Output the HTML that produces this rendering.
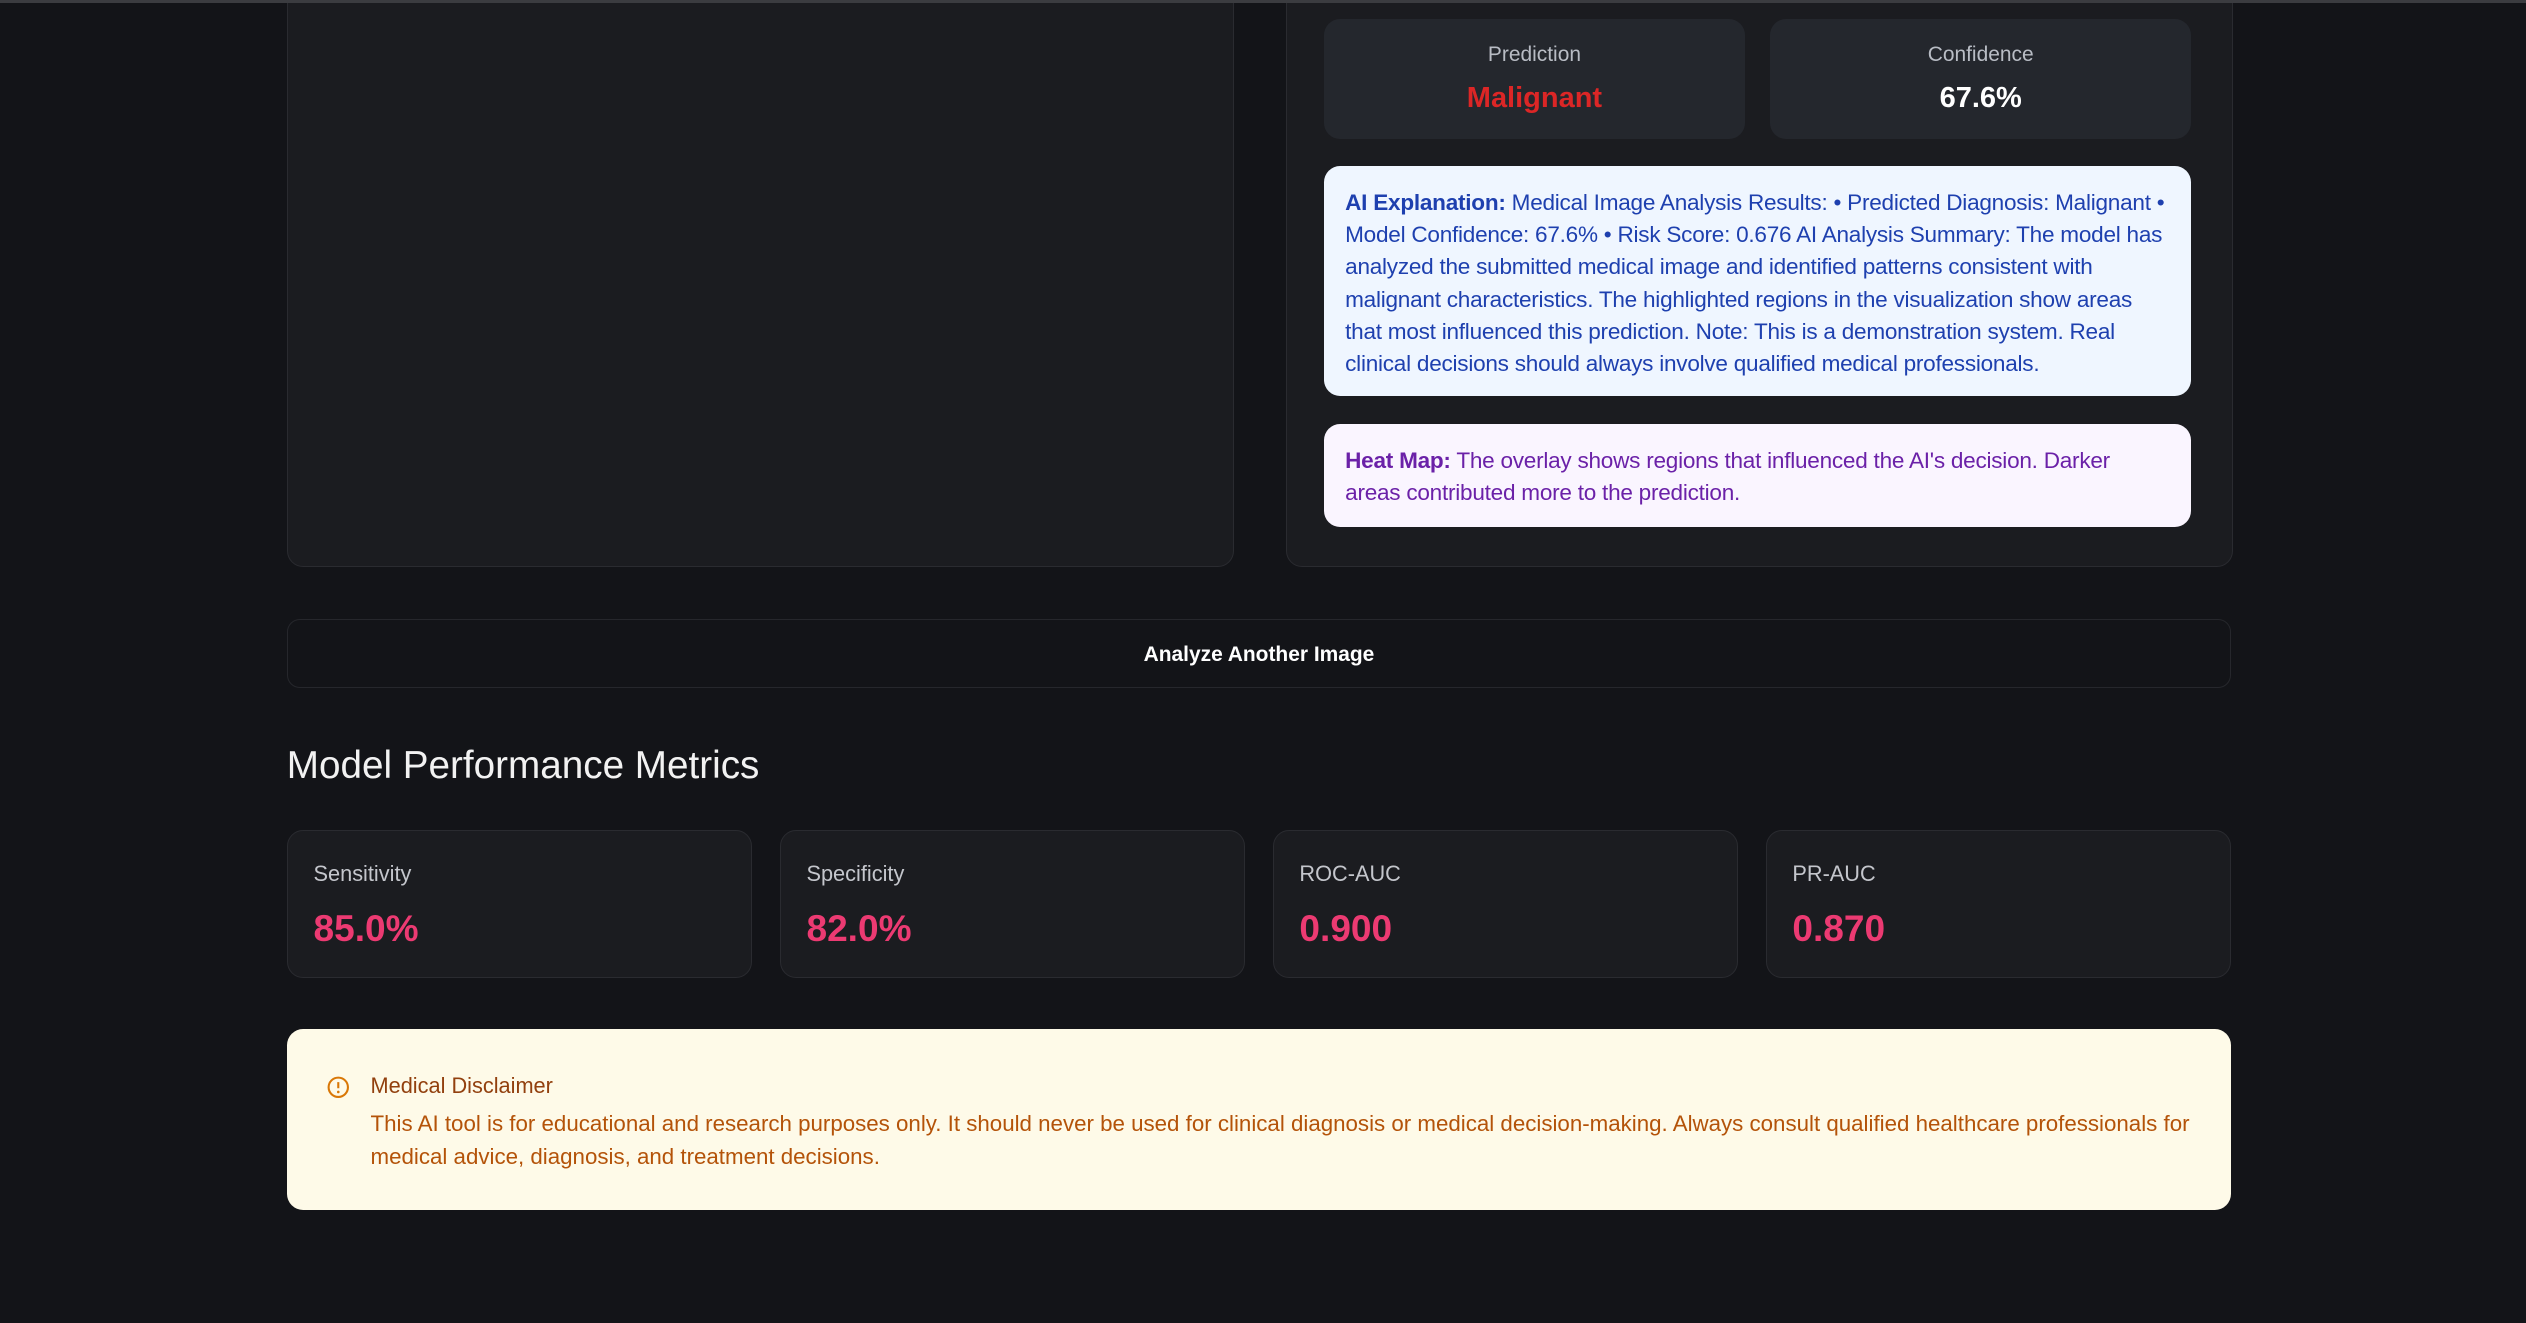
<!DOCTYPE html>
<html><head><meta charset="utf-8"><style>
html,body{margin:0;padding:0;}
body{width:1568px;height:821px;zoom:1.61097;background:#131418;font-family:"Liberation Sans",sans-serif;position:relative;overflow:hidden;}
.abs{position:absolute;box-sizing:border-box;}
.card{background:#1b1c20;border:1px solid #2a2b30;border-radius:10px;}
.stat{background:#24272d;border-radius:10px;text-align:center;}
.stat .l{font-size:13px;color:#b8bcc4;margin-top:15px;}
.stat .v{font-size:18px;font-weight:bold;margin-top:9px;}
.info{border-radius:10px;padding:13px 13px;font-size:14px;line-height:20px;white-space:nowrap;letter-spacing:-0.15px;}
.m{background:#1b1c20;border:1px solid #2a2b30;border-radius:10px;padding:0 16px;}
.m .l{font-size:13.5px;color:#c4c6cc;margin-top:19px;}
.m .v{font-size:23px;font-weight:bold;color:#ec3a72;margin-top:12px;}
</style></head><body>
<div class="abs card" style="left:178px;top:-12px;width:588px;height:364px"></div>
<div class="abs card" style="left:798px;top:-12px;width:588px;height:364px"></div>
<div class="abs" style="left:0;top:0;width:1568px;height:2px;background:#3b3c40"></div>
<div class="abs stat" style="left:822px;top:12px;width:261px;height:74px"><div class="l">Prediction</div><div class="v" style="color:#dc2626">Malignant</div></div>
<div class="abs stat" style="left:1099px;top:12px;width:261px;height:74px"><div class="l">Confidence</div><div class="v" style="color:#fff">67.6%</div></div>
<div class="abs info" style="left:822px;top:103px;width:538px;height:143px;background:#eff6ff;color:#1e40af;"><b>AI Explanation:</b> Medical Image Analysis Results: • Predicted Diagnosis: Malignant •<br>Model Confidence: 67.6% • Risk Score: 0.676 AI Analysis Summary: The model has<br>analyzed the submitted medical image and identified patterns consistent with<br>malignant characteristics. The highlighted regions in the visualization show areas<br>that most influenced this prediction. Note: This is a demonstration system. Real<br>clinical decisions should always involve qualified medical professionals.</div>
<div class="abs info" style="left:822px;top:263px;width:538px;height:64px;background:#faf5ff;color:#6b21a8;"><b>Heat Map:</b> The overlay shows regions that influenced the AI's decision. Darker<br>areas contributed more to the prediction.</div>
<div class="abs" style="left:178px;top:384px;width:1207px;height:43px;border:1px solid #26272c;border-radius:8px;color:#fff;font-weight:bold;font-size:13px;text-align:center;line-height:43px">Analyze Another Image</div>
<div class="abs" style="left:178px;top:462px;color:#f2f2f2;font-size:24px;">Model Performance Metrics</div>
<div class="abs m" style="left:178px;top:515px;width:289px;height:92px"><div class="l">Sensitivity</div><div class="v">85.0%</div></div>
<div class="abs m" style="left:484px;top:515px;width:289px;height:92px"><div class="l">Specificity</div><div class="v">82.0%</div></div>
<div class="abs m" style="left:790px;top:515px;width:289px;height:92px"><div class="l">ROC-AUC</div><div class="v">0.900</div></div>
<div class="abs m" style="left:1096px;top:515px;width:289px;height:92px"><div class="l">PR-AUC</div><div class="v">0.870</div></div>
<div class="abs" style="left:178px;top:639px;width:1207px;height:112px;background:#fefae8;border-radius:10px;">
<svg class="abs" style="left:25px;top:29px" width="14" height="14" viewBox="0 0 14 14"><circle cx="7" cy="7" r="6" fill="none" stroke="#d97706" stroke-width="1.3"/><line x1="7" y1="3.8" x2="7" y2="7.6" stroke="#d97706" stroke-width="1.3"/><circle cx="7" cy="9.9" r="0.8" fill="#d97706"/></svg>
<div class="abs" style="left:52px;top:27px;font-size:13.5px;color:#92400e;">Medical Disclaimer</div>
<div class="abs" style="left:52px;top:49px;white-space:nowrap;font-size:13.85px;line-height:20px;color:#b45309;">This AI tool is for educational and research purposes only. It should never be used for clinical diagnosis or medical decision-making. Always consult qualified healthcare professionals for<br>medical advice, diagnosis, and treatment decisions.</div>
</div>
</body></html>
